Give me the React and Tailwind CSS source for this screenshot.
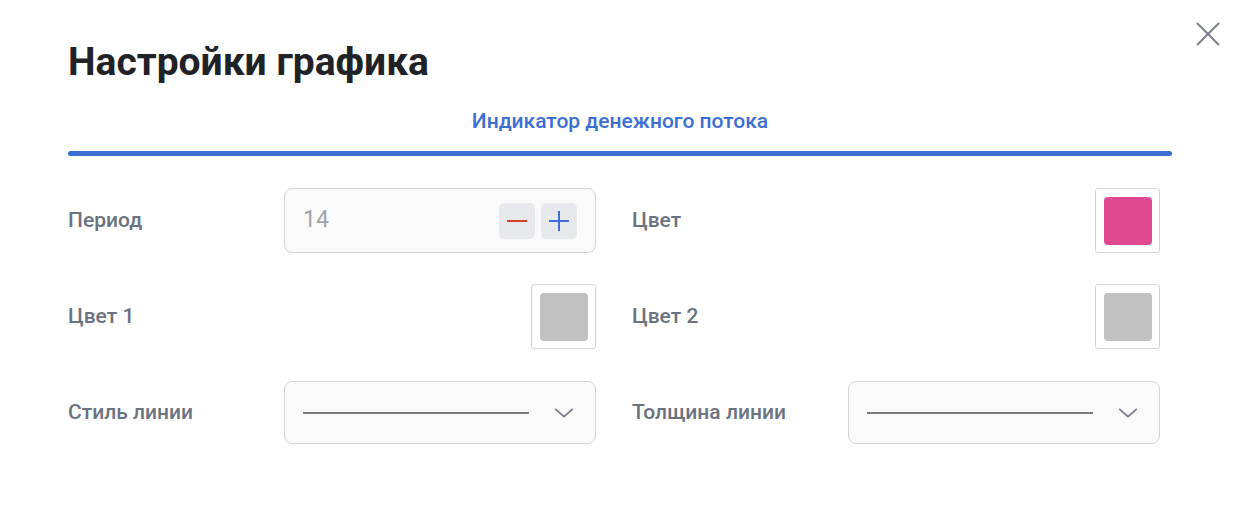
import React from 'react';

function Label({ children }) {
  return <span className="text-[21px] font-medium text-[#6b7280]">{children}</span>;
}

function Swatch({ color }) {
  return (
    <div className="w-[65px] h-[65px] border border-[#d4d4d8] rounded-[3px] bg-white flex items-center justify-center">
      <div className="w-[48px] h-[48px] rounded-[4px]" style={{ backgroundColor: color }} />
    </div>
  );
}

function LineSelect() {
  return (
    <div className="w-[312px] h-[63px] border border-[#d1d5db] rounded-[8px] bg-[#fafafa] flex items-center pl-[18px] pr-[20px]">
      <div className="w-[226px] h-[2px] bg-[#777a80]" />
      <svg className="ml-auto w-[22px] h-[22px] text-[#777a86]" viewBox="0 0 24 24" fill="none" stroke="currentColor" strokeWidth={1.8} strokeLinecap="round" strokeLinejoin="round">
        <path d="M3 8l9 8 9-8" />
      </svg>
    </div>
  );
}

function Stepper() {
  return (
    <div className="w-[312px] h-[65px] border border-[#d1d5db] rounded-[8px] bg-[#fafafa] flex items-center pl-[18px] pr-[18px]">
      <span className="text-[23px] text-[#a1a4ab]">14</span>
      <div className="ml-auto flex gap-[6px]">
        <button className="w-[36px] h-[36px] rounded-[5px] bg-[#e8e9ec] flex items-center justify-center">
          <div className="w-[20px] h-[2px] bg-[#d2452a]" />
        </button>
        <button className="w-[36px] h-[36px] rounded-[5px] bg-[#e8e9ec] flex items-center justify-center">
          <svg className="w-[20px] h-[20px]" viewBox="0 0 20 20" fill="none" stroke="#3b6fd4" strokeWidth={2}>
            <path d="M10 0v20M0 10h20" />
          </svg>
        </button>
      </div>
    </div>
  );
}

function Row({ label, children }) {
  return (
    <div className="flex items-center justify-between h-[65px]">
      <Label>{label}</Label>
      {children}
    </div>
  );
}

export default function App() {
  return (
    <div className="w-[1242px] h-[512px] bg-white relative" style={{ fontFamily: 'Roboto, "Liberation Sans", sans-serif' }}>
      <button className="absolute right-[21px] top-[21px] w-[26px] h-[26px] text-[#7b7f8a]">
        <svg viewBox="0 0 26 26" fill="none" stroke="currentColor" strokeWidth={2} className="w-full h-full">
          <path d="M2 2l22 22M24 2L2 24" />
        </svg>
      </button>
      <div className="pl-[68px] pr-[70px] pt-[38px]">
        <h1 className="text-[39px] leading-[48px] font-bold text-[#1f2226]">Настройки графика</h1>
        <div className="mt-[23px] text-center text-[21px] font-medium text-[#3b6fd4] leading-[24px]">
          Индикатор денежного потока
        </div>
        <div className="mt-[18px] h-[5px] rounded-full bg-[#3b6fd4]" />
        <div className="mt-[32px] pr-[12px] grid grid-cols-2 gap-x-[36px] gap-y-[31px]">
          <Row label="Период"><Stepper /></Row>
          <Row label="Цвет"><Swatch color="#e04a91" /></Row>
          <Row label="Цвет 1"><Swatch color="#c0c0c0" /></Row>
          <Row label="Цвет 2"><Swatch color="#c0c0c0" /></Row>
          <Row label="Стиль линии"><LineSelect /></Row>
          <Row label="Толщина линии"><LineSelect /></Row>
        </div>
      </div>
    </div>
  );
}
